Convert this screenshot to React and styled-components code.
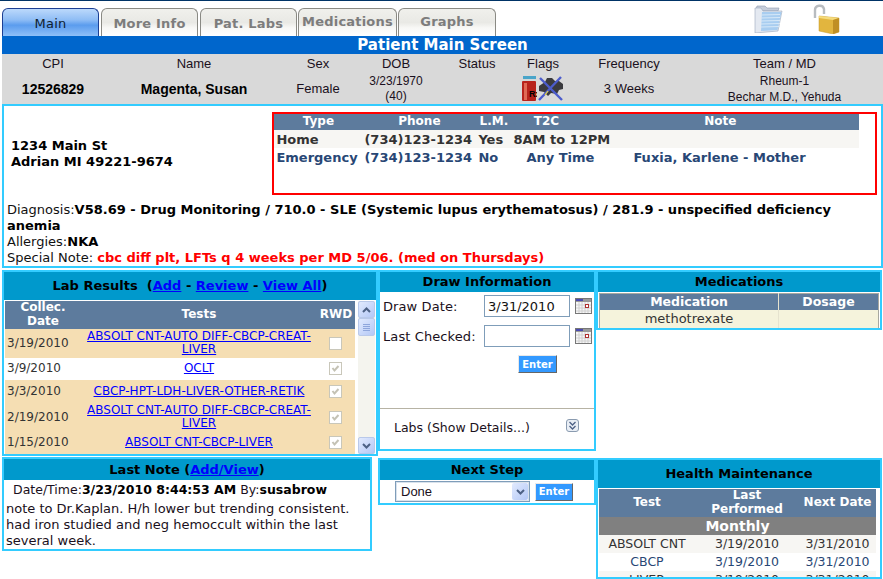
import React from "react";
import styled, { createGlobalStyle } from "styled-components";

const Global = createGlobalStyle`
  html, body { margin: 0; padding: 0; background: #fff; }
  body { font-family: "DejaVu Sans", Verdana, sans-serif; font-size: 13px; color: #111; overflow: hidden; }
  * { box-sizing: border-box; }
  table { border-collapse: collapse; border-spacing: 0; }
  th, td { padding: 0; }
`;

const Page = styled.div`
  width: 883px;
  height: 579px;
  overflow: hidden;
  border-top: 1px solid #003366;
  padding-left: 2px;
`;
const TabBar = styled.div`
  height: 35px;
  display: flex;
  align-items: flex-end;
  gap: 2px;
  width: 881px;
`;
const Tab = styled.div`
  width: ${p => p.$w}px;
  margin-right: ${p => p.$mr || 0}px;
  height: 28px;
  border: 1px solid ${p => (p.$active ? "#1c3f94" : "#8a8a84")};
  border-bottom: none;
  border-radius: 6px 6px 0 0;
  text-align: center;
  font-size: 13px;
  line-height: ${p => p.$lh || 30}px;
  font-weight: ${p => (p.$active ? 500 : 700)};
  letter-spacing: 0.2px;
  color: ${p => (p.$active ? "#10202f" : "#7d7d7d")};
  background: ${p =>
    p.$active
      ? "linear-gradient(#bcd9fb 0%, #8fbdf5 40%, #5b9cee 60%, #8fc0f8 100%)"
      : "linear-gradient(#f0f0ec 0%, #e9e9e5 50%, #f8f8f6 70%, #ffffff 100%)"};
`;
const TopIcons = styled.div`
  margin-left: auto;
  align-self: flex-start;
  display: flex;
  gap: 29px;
  padding: 2px 43px 0 0;
`;
const TitleBar = styled.div`
  width: 881px;
  height: 18px;
  background: #0066cc;
  color: #fff;
  font-weight: 700;
  font-size: 15px;
  line-height: 18px;
  text-align: center;
`;
const InfoGrid = styled.div`
  width: 881px;
  height: 50px;
  background: #d9d9d9;
  display: grid;
  grid-template-columns: 102px 180px 68px 88px 74px 58px 114px 1fr;
  grid-template-rows: 19px 31px;
  font-family: "Liberation Sans", Arial, sans-serif;
  font-size: 13px;
  color: #1a1020;
  text-align: center;
  align-items: center;
`;
const InfoValue = styled.div`
  font-size: ${p => (p.$strong ? 14 : 13)}px;
  font-weight: ${p => (p.$strong ? 700 : 400)};
  line-height: 16px;
  color: ${p => (p.$strong ? "#000" : "#1a1020")};
  display: flex;
  justify-content: center;
  align-items: center;
  flex-direction: column;
  white-space: nowrap;
`;
const SmallLines = styled(InfoValue)`
  font-size: 12px;
  line-height: 15px;
`;
const TeamLines = styled(InfoValue)`
  font-size: 12px;
  line-height: 16px;
`;
const InfoPanel = styled.div`
  width: 881px;
  height: 164px;
  border: 2px solid #33ccff;
  padding: 6px 4px 0 3px;
  display: flex;
  flex-direction: column;
`;
const TopRow = styled.div`
  display: flex;
  height: 86px;
  margin-bottom: 6px;
`;
const Address = styled.div`
  width: 266px;
  padding: 26px 0 0 4px;
  font-weight: 700;
  font-size: 13px;
  line-height: 16px;
  color: #000;
`;
const ContactBox = styled.div`
  width: 606px;
  height: 83px;
  border: 2px solid #ff0000;
`;
const ContactTable = styled.table`
  width: 585px;
  table-layout: fixed;
  font-size: 13px;
  font-weight: 700;
`;
const THead = styled.tr`
  background: #5d7b9d;
  color: #fff;
  th { font-size: ${p => p.$fs || 12}px; font-weight: 700; height: ${p => p.$h || 16}px; line-height: 1.15; text-align: center; }
`;
const ContactRow = styled.tr`
  background: ${p => (p.$alt ? "#f7f6f3" : "#fff")};
  color: ${p => (p.$alt ? "#333" : "#284775")};
  td { height: 18px; white-space: nowrap; padding-left: 2px; overflow: visible; }
`;
const Line = styled.div`
  font-size: 13px;
  line-height: 16px;
  color: #111;
  b { color: #000; }
`;
const RedBold = styled.b`
  && { color: #ff0000; }
`;
const LowerGrid = styled.div`
  margin-top: 2px;
  display: grid;
  grid-template-columns: 376px 218px 287px;
  grid-template-rows: 187px auto;
  align-items: start;
`;
const Panel = styled.div`
  border: 2px solid #33ccff;
  width: ${p => (p.$w ? p.$w + "px" : "100%")};
  height: ${p => p.$h}px;
  margin-top: ${p => p.$mt || 0}px;
  background: #fff;
  overflow: hidden;
`;
const PanelHead = styled.div`
  height: ${p => p.$h}px;
  line-height: ${p => p.$h}px;
  background: #0099cc;
  color: #000;
  font-weight: 700;
  font-size: 13px;
  text-align: center;
  white-space: pre;
  a { color: #0000ff; text-decoration: underline; }
`;
const LabBody = styled.div`
  display: flex;
  padding: 1px 0 0 1px;
`;
const LabTable = styled.table`
  width: 350px;
  table-layout: fixed;
  font-size: 12px;
`;
const LabRow = styled.tr`
  background: ${p => (p.$white ? "#fff" : "#f5deb3")};
  color: #333;
  td { height: ${p => p.$h}px; line-height: 13px; }
  td:first-child { padding-left: 2px; }
  td:nth-child(2) { text-align: center; }
  td:nth-child(2) a { color: #0000ff; text-decoration: underline; }
`;
const CheckCell = styled.span`
  display: block;
  width: 13px;
  height: 13px;
  margin: 0 auto;
  background: #fff;
  border: 1px solid #c9c7ba;
  transform: translateX(-1px);
  svg { display: block; }
`;
const ScrollBar = styled.div`
  width: 17px;
  height: 153px;
  margin-left: 3px;
  background: #f4f4ee;
  display: flex;
  flex-direction: column;
`;
const ScrollBtn = styled.div`
  height: 17px;
  background: linear-gradient(135deg, #e1eafe, #b4c8f6);
  border: 1px solid #b9c9ea;
  border-radius: 2px;
  display: flex;
  align-items: center;
  justify-content: center;
`;
const ScrollThumb = styled(ScrollBtn)`
  height: 18px;
  margin-top: 0;
  flex-direction: column;
  gap: 1px;
  i { display: block; width: 7px; height: 1px; background: #8ea6dc; }
`;
const ScrollSpace = styled.div`
  flex: 1;
`;
const DrawBody = styled.div`
  padding-top: 3px;
  font-size: 13px;
  color: #1a1020;
`;
const DrawRow = styled.div`
  display: flex;
  align-items: center;
  height: 22px;
  margin-bottom: 8px;
`;
const DrawLabel = styled.label`
  width: 104px;
  padding-left: 3px;
  letter-spacing: 0.1px;
`;
const DateInput = styled.input`
  width: 86px;
  height: 22px;
  border: 1px solid #7f9db9;
  padding: 0 3px;
  font: 13px "DejaVu Sans", Verdana, sans-serif;
  color: #111;
  margin-right: 5px;
  outline: none;
`;
const EnterBtn = styled.button`
  width: ${p => p.$w}px;
  height: 18px;
  padding: 0;
  border: 1px solid;
  border-color: #e8e8e8 #666 #666 #e8e8e8;
  background: #3399ff;
  color: #fff;
  font: 700 10px "DejaVu Sans", Verdana, sans-serif;
`;
const EnterRow = styled.div`
  padding: 0 0 0 138px;
  height: 53px;
`;
const Details = styled.div`
  border-top: 1px solid #b7b3a4;
  height: 42px;
  display: flex;
  align-items: center;
  padding: 0 0 4px 14px;
  justify-content: space-between;
  padding-right: 15px;
  font-size: 12.5px;
  color: #1a1020;
`;
const Chevron = styled.div`
  width: 13px;
  height: 13px;
  border: 1px solid #8a9bb0;
  border-radius: 3px;
  background: #e9eef5;
  margin-top: -5px;
  svg { display: block; }
`;
const NoteBody = styled.div`
  font-size: 13px;
  line-height: 16px;
  padding: 2px 0 0 2px;
  color: #1a1020;
  b { color: #000; }
`;
const NoteMeta = styled.div`
  padding: 0 0 2px 7px;
  height: 19px;
  font-size: 12.5px;
  white-space: nowrap;
`;
const NextRow = styled.div`
  display: flex;
  align-items: center;
  padding: 1px 0 0 15px;
  gap: 5px;
`;
const FakeSelect = styled.div`
  width: 135px;
  height: 21px;
  border: 1px solid #7f9db9;
  outline: 1px solid #d9e2ec;
  outline-offset: -2px;
  display: flex;
  align-items: center;
  justify-content: space-between;
  padding: 1px 1px 1px 5px;
  font: 12px "Liberation Sans", Arial, sans-serif;
  font-size: 13px;
  color: #1a1020;
`;
const SelectBtn = styled.div`
  width: 16px;
  height: 17px;
  border-radius: 2px;
  background: linear-gradient(135deg, #e1eafe, #b4c8f6);
  display: flex;
  align-items: center;
  justify-content: center;
`;
const MedsTable = styled.table`
  width: 280px;
  margin: 1px 0 0 1px;
  table-layout: fixed;
  font-size: 13px;
  border: 1px solid #a8a8a0;
  th + th, td + td { border-left: 1px solid #e6e3cf; }
`;
const MedRow = styled.tr`
  background: #f5f3dc;
  color: #333;
  td { height: 19px; text-align: center; }
`;
const HealthTable = styled.table`
  width: 277px;
  margin: 1px 0 0 1px;
  table-layout: fixed;
  font-size: 12.5px;
  text-align: center;
`;
const GroupRow = styled.tr`
  background: #808080;
  color: #fff;
  td { height: 18px; font-weight: 700; font-size: 14px; }
`;
const HealthRow = styled.tr`
  background: ${p => (p.$alt ? "#f7f6f3" : "#fff")};
  color: ${p => (p.$alt ? "#333" : "#284775")};
  td { height: 18px; white-space: nowrap; }
`;

const Folder = () => (
  <svg width="30" height="30" viewBox="0 0 30 30">
    <path d="M3 6 L4 3 H12 L14 5 H26 L25 8 H3Z" fill="#c6cedb" stroke="#8e9bb0" strokeWidth=".6" />
    <path d="M3 6 H9 L10 8 H4 L3 29 H24 L29 7 H27" fill="none" />
    <path d="M2 5 H8 L10 8 H29 L25 28 L2 30Z" fill="#e4e9f1" stroke="#9ba8bc" strokeWidth=".6" />
    <path d="M9 9 H28.5 L24.5 27 L8 28Z" fill="#a8cdf0" />
    {[12, 15, 18, 21, 24].map(y => (
      <line key={y} x1="8" y1={y} x2="27" y2={y - 0.5} stroke="#d6e8f8" strokeWidth="1" />
    ))}
  </svg>
);
const Lock = () => (
  <svg width="28" height="31" viewBox="0 0 28 31">
    <path d="M3 15 V7 C3 2 11 1 12 6 V11" fill="none" stroke="#b8bcc0" strokeWidth="2.4" />
    <path d="M7 13 L27 15 V29 L21 31 L7 28Z" fill="#e2b53e" stroke="#c49a2a" strokeWidth=".5" />
    <path d="M7 13 L27 15 L21 17 L7 15Z" fill="#f5db7c" />
    <path d="M21 17 V31 L27 29 V15Z" fill="#c08f24" />
  </svg>
);
const Bottle = () => (
  <svg width="15" height="25" viewBox="0 0 15 25">
    <rect x="1" y="0" width="13" height="4" fill="#4aa5c9" />
    <rect x="1" y="3" width="13" height="3" fill="#d3d8d8" />
    <rect x="0" y="5" width="14" height="20" rx="1" fill="#b8231c" />
    <rect x="2" y="7" width="3" height="17" fill="#e06a55" />
    <text x="7" y="21" fontSize="9" fontWeight="700" fill="#000" fontFamily="Liberation Sans">Rx</text>
  </svg>
);
const FlagCar = () => (
  <svg width="27" height="25" viewBox="0 0 27 25">
    <path d="M2 10 L8 6 L10 2 H15 L18 5 H22 L26 8 V13 L22 14 L20 18 L14 17 L11 20 L7 16 L2 15Z" fill="#3a3a3e" />
    <path d="M3 2 L25 24 M24 1 L2 24" stroke="#4c5ccc" strokeWidth="2.4" />
    <path d="M8 19 L11 15" stroke="#e8d83a" strokeWidth="1.2" />
  </svg>
);
const Calendar = () => (
  <svg width="17" height="16" viewBox="0 0 17 16" style={{ flex: "none" }}>
    <rect x=".5" y=".5" width="16" height="15" fill="#f7f7f7" stroke="#777" />
    <rect x="1" y="1" width="15" height="3" fill="#9a9a9a" />
    <rect x="1" y="1" width="7" height="2" fill="#4a4ab0" />
    {[4, 7, 10, 13].map(x => <line key={x} x1={x} y1="4" x2={x} y2="15" stroke="#cfcfcf" />)}
    {[7, 10, 13].map(y => <line key={y} x1="1" y1={y} x2="16" y2={y} stroke="#cfcfcf" />)}
    <rect x="10.5" y="6.5" width="3" height="3" fill="#fff" stroke="#b03030" />
  </svg>
);
const Tick = () => (
  <svg width="11" height="11" viewBox="0 0 11 11">
    <path d="M2.5 5 L4.5 7.5 L8.5 3" fill="none" stroke="#c4c2b4" strokeWidth="2" />
  </svg>
);
const Arrow = ({ up, color = "#4d6185" }) => (
  <svg width="9" height="6" viewBox="0 0 9 6">
    <path d={up ? "M1 5 L4.5 1.5 L8 5" : "M1 1 L4.5 4.5 L8 1"} fill="none" stroke={color} strokeWidth="2" />
  </svg>
);

const labs = [
  { d: "3/19/2010", t: "ABSOLT CNT-AUTO DIFF-CBCP-CREAT-LIVER", h: 28, c: false },
  { d: "3/9/2010", t: "OCLT", h: 22, c: true, white: true },
  { d: "3/3/2010", t: "CBCP-HPT-LDH-LIVER-OTHER-RETIK", h: 22, c: true },
  { d: "2/19/2010", t: "ABSOLT CNT-AUTO DIFF-CBCP-CREAT-LIVER", h: 28, c: true },
  { d: "1/15/2010", t: "ABSOLT CNT-CBCP-LIVER", h: 22, c: true },
];
const health = [
  ["ABSOLT CNT", true],
  ["CBCP", false],
  ["LIVER", true],
];

export default function App() {
  return (
    <Page>
      <Global />
      <TabBar>
        <Tab $w={97} $active>Main</Tab>
        <Tab $w={97}>More Info</Tab>
        <Tab $w={97}>Pat. Labs</Tab>
        <Tab $w={99} $lh={26} style={{ marginLeft: -1 }}>Medications</Tab>
        <Tab $w={98} $lh={26} style={{ marginLeft: -1 }}>Graphs</Tab>
        <TopIcons>
          <Folder />
          <Lock />
        </TopIcons>
      </TabBar>
      <TitleBar>Patient Main Screen</TitleBar>
      <InfoGrid>
        <div>CPI</div><div>Name</div><div>Sex</div><div>DOB</div><div>Status</div><div>Flags</div><div>Frequency</div><div>Team / MD</div>
        <InfoValue $strong>12526829</InfoValue>
        <InfoValue $strong>Magenta, Susan</InfoValue>
        <InfoValue>Female</InfoValue>
        <SmallLines>3/23/1970<span>(40)</span></SmallLines>
        <InfoValue />
        <InfoValue style={{ flexDirection: "row" }}><Bottle /><FlagCar /></InfoValue>
        <InfoValue>3 Weeks</InfoValue>
        <TeamLines>Rheum-1<span>Bechar M.D., Yehuda</span></TeamLines>
      </InfoGrid>
      <InfoPanel>
        <TopRow>
          <Address>1234 Main St<br />Adrian MI 49221-9674</Address>
          <ContactBox>
            <ContactTable>
              <colgroup>
                <col width="88" /><col width="114" /><col width="35" /><col width="70" /><col />
              </colgroup>
              <thead>
                <THead><th>Type</th><th>Phone</th><th>L.M.</th><th>T2C</th><th>Note</th></THead>
              </thead>
              <tbody>
                <ContactRow $alt><td>Home</td><td>(734)123-1234</td><td>Yes</td><td>8AM to 12PM</td><td /></ContactRow>
                <ContactRow><td>Emergency</td><td>(734)123-1234</td><td>No</td><td style={{ paddingLeft: 15 }}>Any Time</td><td style={{ paddingLeft: 52 }}>Fuxia, Karlene - Mother</td></ContactRow>
              </tbody>
            </ContactTable>
          </ContactBox>
        </TopRow>
        <Line>Diagnosis:<b>V58.69 - Drug Monitoring / 710.0 - SLE (Systemic lupus erythematosus) / 281.9 - unspecified deficiency anemia</b></Line>
        <Line>Allergies:<b>NKA</b></Line>
        <Line>Special Note: <RedBold>cbc diff plt, LFTs q 4 weeks per MD 5/06. (med on Thursdays)</RedBold></Line>
      </InfoPanel>
      <LowerGrid>
        <Panel $h={186}>
          <PanelHead $h={28}>Lab Results  (<a>Add</a> - <a>Review</a> - <a>View All</a>)</PanelHead>
          <LabBody>
            <LabTable>
              <colgroup><col width="76" /><col width="236" /><col /></colgroup>
              <thead>
                <THead $h={28}><th>Collec.<br />Date</th><th>Tests</th><th>RWD</th></THead>
              </thead>
              <tbody>
                {labs.map(l => (
                  <LabRow key={l.d} $h={l.h} $white={l.white}>
                    <td>{l.d}</td>
                    <td><a>{l.t}</a></td>
                    <td><CheckCell>{l.c && <Tick />}</CheckCell></td>
                  </LabRow>
                ))}
              </tbody>
            </LabTable>
            <ScrollBar>
              <ScrollBtn><Arrow up /></ScrollBtn>
              <ScrollThumb><i /><i /><i /><i /></ScrollThumb>
              <ScrollSpace />
              <ScrollBtn><Arrow /></ScrollBtn>
            </ScrollBar>
          </LabBody>
        </Panel>
        <Panel $h={181}>
          <PanelHead $h={20}>Draw Information</PanelHead>
          <DrawBody>
            <DrawRow>
              <DrawLabel>Draw Date:</DrawLabel>
              <DateInput defaultValue="3/31/2010" />
              <Calendar />
            </DrawRow>
            <DrawRow>
              <DrawLabel>Last Checked:</DrawLabel>
              <DateInput />
              <Calendar />
            </DrawRow>
            <EnterRow><EnterBtn $w={39}>Enter</EnterBtn></EnterRow>
            <Details>
              <span>Labs (Show Details...)</span>
              <Chevron>
                <svg width="11" height="11" viewBox="0 0 11 11">
                  <path d="M2.5 2 L5.5 5 L8.5 2 M2.5 6 L5.5 9 L8.5 6" fill="none" stroke="#4d6185" strokeWidth="1.3" />
                </svg>
              </Chevron>
            </Details>
          </DrawBody>
        </Panel>
        <Panel $h={60} $w={286}>
          <PanelHead $h={20}>Medications</PanelHead>
          <MedsTable>
            <colgroup><col width="179" /><col /></colgroup>
            <thead><THead $fs={12.5} $h={16}><th>Medication</th><th>Dosage</th></THead></thead>
            <tbody><MedRow><td>methotrexate</td><td /></MedRow></tbody>
          </MedsTable>
        </Panel>
        <Panel $h={94} $w={370}>
          <PanelHead $h={21}>Last Note (<a>Add/View</a>)</PanelHead>
          <NoteBody>
            <NoteMeta>Date/Time:<b>3/23/2010 8:44:53 AM</b> By:<b>susabrow</b></NoteMeta>
            note to Dr.Kaplan. H/h lower but trending consistent. had iron studied and neg hemoccult within the last several week.
          </NoteBody>
        </Panel>
        <Panel $h={47} $mt={1}>
          <PanelHead $h={20}>Next Step</PanelHead>
          <NextRow>
            <FakeSelect>Done<SelectBtn><Arrow /></SelectBtn></FakeSelect>
            <EnterBtn $w={38}>Enter</EnterBtn>
          </NextRow>
        </Panel>
        <Panel $h={121} $w={286} $mt={1}>
          <PanelHead $h={28}>Health Maintenance</PanelHead>
          <HealthTable>
            <colgroup><col width="96" /><col width="104" /><col /></colgroup>
            <thead><THead $fs={12} $h={15}><th>Test</th><th>Last Performed</th><th>Next Date</th></THead></thead>
            <tbody>
              <GroupRow><td colSpan={3}>Monthly</td></GroupRow>
              {health.map(([n, alt]) => (
                <HealthRow key={n} $alt={alt}><td>{n}</td><td>3/19/2010</td><td>3/31/2010</td></HealthRow>
              ))}
            </tbody>
          </HealthTable>
        </Panel>
      </LowerGrid>
    </Page>
  );
}
